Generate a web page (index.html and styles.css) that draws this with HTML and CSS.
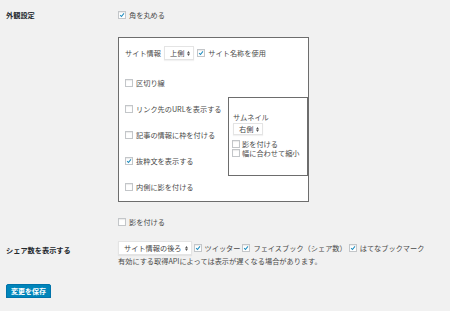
FILE: index.html
```html
<!DOCTYPE html>
<html lang="ja">
<head>
  <meta charset="UTF-8">
  <meta name="viewport" content="width=device-width, initial-scale=1.0">
  <title>外観設定</title>
  <link rel="stylesheet" href="styles.css">
</head>
<body>
  <div class="wrap">
    <div class="row first">
      <div class="label">外観設定</div>
      <div class="field">
        <div class="check"><span class="box on"><svg viewBox="0 0 8 8"><path d="M1.5 4.2 L3.3 6 L6.6 1.8"/></svg></span>角を丸める</div>

        <div class="frame">
          <div class="head-line">
            <span class="title">サイト情報</span>
            <span class="select sel-top">上側<svg class="arrows" viewBox="0 0 4 7"><path d="M0 3 L2 0 L4 3 Z M0 4 L2 7 L4 4 Z"/></svg></span>
            <span class="check"><span class="box on"><svg viewBox="0 0 8 8"><path d="M1.5 4.2 L3.3 6 L6.6 1.8"/></svg></span>サイト名称を使用</span>
          </div>

          <div class="split">
            <div class="col">
              <div class="check"><span class="box"></span>区切り線</div>
              <div class="check"><span class="box"></span>リンク先のURLを表示する</div>
              <div class="check"><span class="box"></span>記事の情報に枠を付ける</div>
              <div class="check"><span class="box on"><svg viewBox="0 0 8 8"><path d="M1.5 4.2 L3.3 6 L6.6 1.8"/></svg></span>抜粋文を表示する</div>
              <div class="check"><span class="box"></span>内側に影を付ける</div>
            </div>

            <div class="thumb">
              <div class="title">サムネイル</div>
              <span class="select sel-side">右側<svg class="arrows" viewBox="0 0 4 7"><path d="M0 3 L2 0 L4 3 Z M0 4 L2 7 L4 4 Z"/></svg></span>
              <div class="check tight"><span class="box"></span>影を付ける</div>
              <div class="check tight"><span class="box"></span>幅に合わせて縮小</div>
            </div>
          </div>
        </div>

        <div class="check outer-shadow"><span class="box"></span>影を付ける</div>
      </div>
    </div>

    <div class="row share">
      <div class="label">シェア数を表示する</div>
      <div class="field">
        <div class="share-line">
          <span class="select sel-share">サイト情報の後ろ<svg class="arrows" viewBox="0 0 4 7"><path d="M0 3 L2 0 L4 3 Z M0 4 L2 7 L4 4 Z"/></svg></span>
          <span class="check"><span class="box on"><svg viewBox="0 0 8 8"><path d="M1.5 4.2 L3.3 6 L6.6 1.8"/></svg></span>ツイッター</span>
          <span class="check"><span class="box on"><svg viewBox="0 0 8 8"><path d="M1.5 4.2 L3.3 6 L6.6 1.8"/></svg></span>フェイスブック（シェア数）</span>
          <span class="check"><span class="box on"><svg viewBox="0 0 8 8"><path d="M1.5 4.2 L3.3 6 L6.6 1.8"/></svg></span>はてなブックマーク</span>
        </div>
        <p class="note">有効にする取得APIによっては表示が遅くなる場合があります。</p>
      </div>
    </div>

    <button type="button" class="save">変更を保存</button>
  </div>
</body>
</html>
```

FILE: styles.css
```css
body {
  margin: 0;
  background-color: #f1f1f1;
  font-family: "Noto Sans CJK JP", "Noto Sans", sans-serif;
  font-size: 7.2px;
  color: #4a4a4a;
}

.wrap {
  padding: 10px 0 0 6px;
}

.row {
  display: flex;
}

.label {
  width: 112px;
  height: 10px;
  line-height: 10px;
  font-weight: bold;
  color: #23282d;
}

.share .label {
  margin-top: 2px;
  height: 14px;
  line-height: 14px;
}

.check {
  display: flex;
  align-items: center;
  height: 10px;
  line-height: 10px;
  white-space: nowrap;
}

.box {
  flex: none;
  width: 6px;
  height: 6px;
  margin-right: 3px;
  border: 1px solid #c3c6c9;
  background: #fff;
  box-shadow: inset 0 1px 1px rgba(0, 0, 0, 0.08);
  display: flex;
  align-items: center;
  justify-content: center;
}

.box svg {
  width: 6px;
  height: 6px;
}

.box svg path {
  fill: none;
  stroke: #1e8cbe;
  stroke-width: 1.4;
}

.frame {
  margin-top: 17px;
  width: 183px;
  padding: 8px 0 9px 6px;
  border: 1px solid #6d6d6d;
  background: #fff;
}

.head-line {
  display: flex;
  align-items: center;
  height: 14px;
}

.head-line .title {
  margin-right: 3px;
}

.select {
  display: inline-flex;
  align-items: center;
  background: #fff;
  border: 1px solid #e4e4e4;
  box-shadow: 0 1px 1px rgba(0, 0, 0, 0.05);
  color: #444;
  white-space: nowrap;
}

.arrows {
  width: 3px;
  height: 5px;
  margin-left: 3px;
  fill: #555;
}

.sel-top {
  height: 12px;
  padding: 0 3px 0 5px;
  margin-right: 3px;
}

.split {
  display: flex;
  margin-top: 18px;
}

.col {
  flex: none;
  width: 103px;
  display: flex;
  flex-direction: column;
  gap: 16px;
}

.thumb {
  flex: none;
  width: 75px;
  margin-top: 19px;
  padding: 14px 0 18px 3px;
  border: 1px solid #6d6d6d;
  background: #fff;
  align-self: flex-start;
}

.thumb .title {
  height: 10px;
  line-height: 10px;
  padding-left: 1px;
}

.sel-side {
  height: 10px;
  margin: 1px 0 0 1px;
  padding: 0 3px 0 5px;
}

.check.tight {
  height: 9px;
}

.check.tight .box {
  margin-right: 2px;
}

.thumb .sel-side + .tight {
  margin-top: 4px;
}

.outer-shadow {
  margin-top: 15px;
}

.share {
  margin-top: 14px;
}

.share-line {
  display: flex;
  align-items: center;
  height: 14px;
}

.share-line .check {
  margin-right: 2px;
}

.sel-share {
  height: 12px;
  padding: 0 3px 0 5px;
  margin-right: 2px;
}

.note {
  margin: 1px 0 0;
  height: 10px;
  line-height: 10px;
  white-space: nowrap;
}

.save {
  margin-top: 18px;
  width: 45px;
  height: 14px;
  padding: 0;
  border: 1px solid #0073aa;
  border-radius: 2px;
  background-color: #0085ba;
  box-shadow: 0 1px 0 #006799;
  color: #fff;
  font-family: "Noto Sans CJK JP", "Noto Sans", sans-serif;
  font-size: 7px;
  font-weight: bold;
  line-height: 12px;
}
```
